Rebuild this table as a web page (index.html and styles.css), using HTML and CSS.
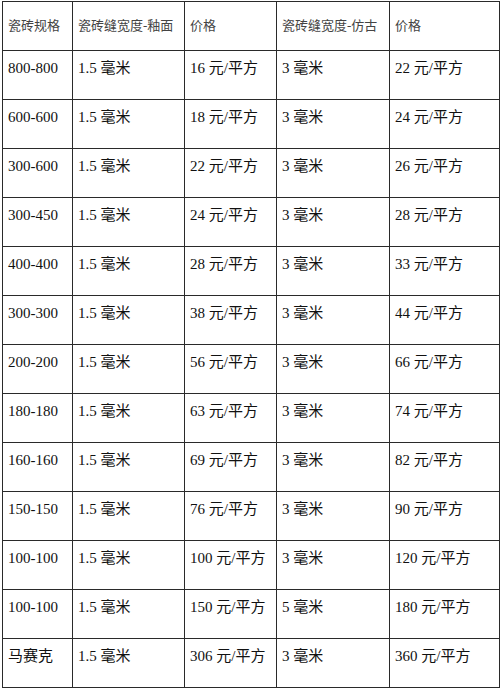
FILE: index.html
```html
<!DOCTYPE html>
<html lang="zh">
<head>
<meta charset="utf-8">
<title>瓷砖缝价格表</title>
<link rel="stylesheet" href="styles.css">
</head>
<body>
<table class="price-table">
  <colgroup>
    <col class="c1"><col class="c2"><col class="c3"><col class="c4"><col class="c5">
  </colgroup>
  <thead>
    <tr><th>瓷砖规格</th><th>瓷砖缝宽度-釉面</th><th>价格</th><th>瓷砖缝宽度-仿古</th><th>价格</th></tr>
  </thead>
  <tbody>
    <tr><td>800-800</td><td>1.5 毫米</td><td>16 元/平方</td><td>3 毫米</td><td>22 元/平方</td></tr>
    <tr><td>600-600</td><td>1.5 毫米</td><td>18 元/平方</td><td>3 毫米</td><td>24 元/平方</td></tr>
    <tr><td>300-600</td><td>1.5 毫米</td><td>22 元/平方</td><td>3 毫米</td><td>26 元/平方</td></tr>
    <tr><td>300-450</td><td>1.5 毫米</td><td>24 元/平方</td><td>3 毫米</td><td>28 元/平方</td></tr>
    <tr><td>400-400</td><td>1.5 毫米</td><td>28 元/平方</td><td>3 毫米</td><td>33 元/平方</td></tr>
    <tr><td>300-300</td><td>1.5 毫米</td><td>38 元/平方</td><td>3 毫米</td><td>44 元/平方</td></tr>
    <tr><td>200-200</td><td>1.5 毫米</td><td>56 元/平方</td><td>3 毫米</td><td>66 元/平方</td></tr>
    <tr><td>180-180</td><td>1.5 毫米</td><td>63 元/平方</td><td>3 毫米</td><td>74 元/平方</td></tr>
    <tr><td>160-160</td><td>1.5 毫米</td><td>69 元/平方</td><td>3 毫米</td><td>82 元/平方</td></tr>
    <tr><td>150-150</td><td>1.5 毫米</td><td>76 元/平方</td><td>3 毫米</td><td>90 元/平方</td></tr>
    <tr><td>100-100</td><td>1.5 毫米</td><td>100 元/平方</td><td>3 毫米</td><td>120 元/平方</td></tr>
    <tr><td>100-100</td><td>1.5 毫米</td><td>150 元/平方</td><td>5 毫米</td><td>180 元/平方</td></tr>
    <tr><td>马赛克</td><td>1.5 毫米</td><td>306 元/平方</td><td>3 毫米</td><td>360 元/平方</td></tr>
  </tbody>
</table>
</body>
</html>
```
FILE: styles.css
```css
html, body {
  margin: 0;
  padding: 0;
  background: #fff;
}
body {
  font-family: "Liberation Serif", "Noto Sans CJK SC", serif;
  color: #111;
}
.price-table {
  border-collapse: collapse;
  table-layout: fixed;
  width: 497px;
  margin: 1px 0 0 2px;
}
.c1 { width: 70px; }
.c2 { width: 112px; }
.c3 { width: 92px; }
.c4 { width: 113px; }
.c5 { width: 110px; }
.price-table th,
.price-table td {
  border: 1px solid #2a2a2a;
  height: 49px;
  box-sizing: border-box;
  text-align: left;
  white-space: nowrap;
  overflow: hidden;
}
.price-table th {
  font-weight: normal;
  font-size: 13px;
  color: #444;
  vertical-align: middle;
  padding: 0 5px;
  line-height: 18px;
}
.price-table td {
  font-size: 15px;
  vertical-align: top;
  padding: 8px 5px 0 5px;
  line-height: 19px;
}
```
